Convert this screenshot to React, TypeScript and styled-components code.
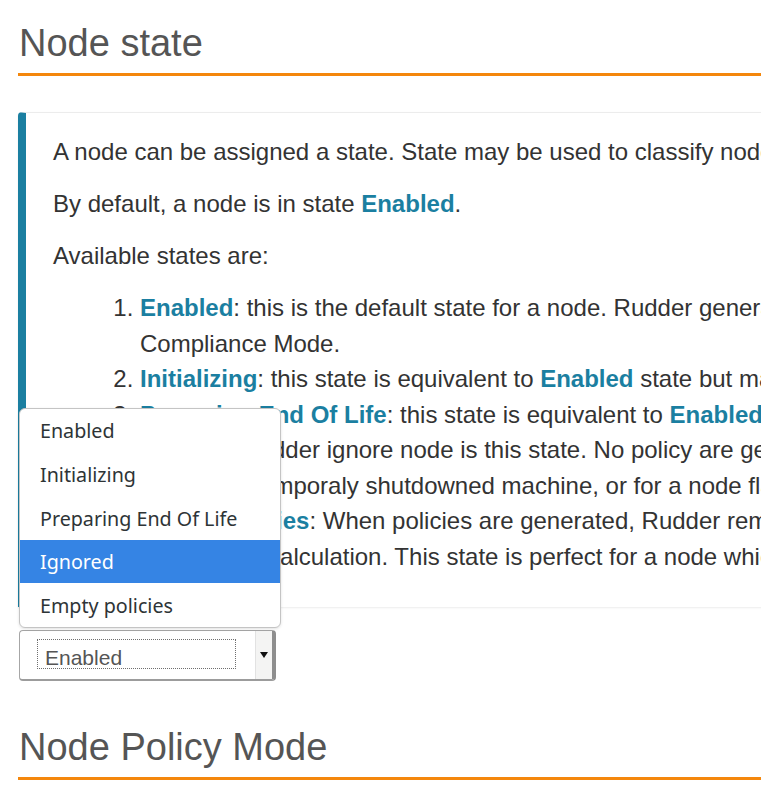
import React from "react";
import styled, { createGlobalStyle } from "styled-components";

const GlobalStyle = createGlobalStyle`
  html, body {
    margin: 0;
    padding: 0;
    overflow: hidden;
    background: #ffffff;
  }
  body {
    font-family: "Liberation Sans", Arial, sans-serif;
    color: #333333;
  }
`;

const Page = styled.div`
  width: 1400px;
  padding: 21.5px 0 0 18px;
  box-sizing: border-box;
`;

const Heading = styled.h2<{ $top?: number }>`
  margin: ${(p) => p.$top ?? 0}px 0 0 0;
  padding: 0 0 8.5px 1px;
  font-family: "Liberation Sans", Arial, sans-serif;
  font-weight: 400;
  font-size: 38px;
  line-height: 43px;
  color: #555555;
  border-bottom: 3px solid #f4870c;
`;

const NoteBox = styled.section`
  margin-top: 36px;
  padding: 21px 0 33px 27px;
  border-top: 1px solid #ececec;
  border-left: 8px solid #1b7fa1;
  border-top-left-radius: 4px;
  box-shadow: 0 1px 2px rgba(0, 0, 0, 0.08);
  font-size: 24px;
  line-height: 35.5px;
  color: #333333;
`;

const Para = styled.p`
  margin: 0 0 16.5px 0;
  white-space: nowrap;
`;

const StateList = styled.ol`
  margin: 0;
  padding-left: 87px;
`;

const StateItem = styled.li`
  white-space: nowrap;
`;

const StateName = styled.strong`
  color: #1b7fa1;
  font-weight: 700;
`;

const SelectWrap = styled.div`
  position: relative;
  margin: 23px 0 0 1px;
  width: 257px;
`;

const SelectBox = styled.div`
  display: flex;
  height: 51px;
  box-sizing: border-box;
  border: 1px solid #a6a6a6;
  border-bottom: 2px solid #9c9c9c;
  border-right: 4px solid #8e8e8e;
  border-radius: 4px;
  background: #ffffff;
  overflow: hidden;
`;

const SelectField = styled.div`
  flex: 1;
  display: flex;
  align-items: flex-start;
  padding: 8px 0 0 17px;
`;

const FocusRing = styled.div`
  width: 199px;
  height: 30px;
  box-sizing: border-box;
  border: 1px dotted #6f6f6f;
  padding-left: 7px;
  font-family: "Liberation Sans", Arial, sans-serif;
  font-size: 21px;
  line-height: 36px;
  color: #555555;
  overflow: hidden;
`;

const ArrowButton = styled.div`
  width: 17px;
  background: #f4f4f3;
  border-left: 1px solid #e2e2e2;
  display: flex;
  justify-content: center;
  padding-top: 21px;
  box-sizing: border-box;
`;

const Caret = styled.span`
  display: block;
  width: 0;
  height: 0;
  border-left: 4.5px solid transparent;
  border-right: 4.5px solid transparent;
  border-top: 6px solid #111111;
`;

const Popup = styled.ul`
  position: absolute;
  left: 0;
  bottom: calc(100% + 2px);
  width: 262px;
  margin: 0;
  padding: 0;
  list-style: none;
  background: #ffffff;
  border: 1px solid #c4c4c4;
  border-radius: 6px;
  box-shadow: 0 1px 3px rgba(0, 0, 0, 0.12);
  overflow: hidden;
  box-sizing: border-box;
`;

const PopupOption = styled.li<{ $active?: boolean }>`
  height: 43.6px;
  padding-left: 20px;
  display: flex;
  align-items: center;
  font-family: "Noto Sans", "Open Sans", sans-serif;
  font-size: 19.7px;
  color: ${(p) => (p.$active ? "#ffffff" : "#2e3436")};
  background: ${(p) => (p.$active ? "#3584e4" : "transparent")};
`;

const options = [
  "Enabled",
  "Initializing",
  "Preparing End Of Life",
  "Ignored",
  "Empty policies",
];

export default function App() {
  return (
    <>
      <GlobalStyle />
      <Page>
        <Heading>Node state</Heading>
        <NoteBox>
          <Para>
            A node can be assigned a state. State may be used to classify nodes and change the way Rudder manages them.
          </Para>
          <Para>
            By default, a node is in state <StateName>Enabled</StateName>.
          </Para>
          <Para>Available states are:</Para>
          <StateList>
            <StateItem>
              <StateName>Enabled</StateName>: this is the default state for a node. Rudder generates policies and checks compliance according to the
              <br />
              Compliance Mode.
            </StateItem>
            <StateItem>
              <StateName>Initializing</StateName>: this state is equivalent to <StateName>Enabled</StateName> state but may be used to mark nodes being set up.
            </StateItem>
            <StateItem>
              <StateName>Preparing End Of Life</StateName>: this state is equivalent to <StateName>Enabled</StateName> state but may be used to mark nodes before decommission.
            </StateItem>
            <StateItem>
              <StateName>Ignored</StateName>: Rudder ignore node is this state. No policy are generated for them. It can be
              <br />
              used for a temporaly shutdowned machine, or for a node flagged as out of scope.
            </StateItem>
            <StateItem>
              <StateName>Empty policies</StateName>: When policies are generated, Rudder removes all policies for the node and excludes it from
              <br />
              compliance calculation. This state is perfect for a node which must not be managed.
            </StateItem>
          </StateList>
        </NoteBox>
        <SelectWrap>
          <Popup>
            {options.map((o) => (
              <PopupOption key={o} $active={o === "Ignored"}>
                {o}
              </PopupOption>
            ))}
          </Popup>
          <SelectBox>
            <SelectField>
              <FocusRing>Enabled</FocusRing>
            </SelectField>
            <ArrowButton>
              <Caret />
            </ArrowButton>
          </SelectBox>
        </SelectWrap>
        <Heading $top={44.5}>Node Policy Mode</Heading>
      </Page>
    </>
  );
}
